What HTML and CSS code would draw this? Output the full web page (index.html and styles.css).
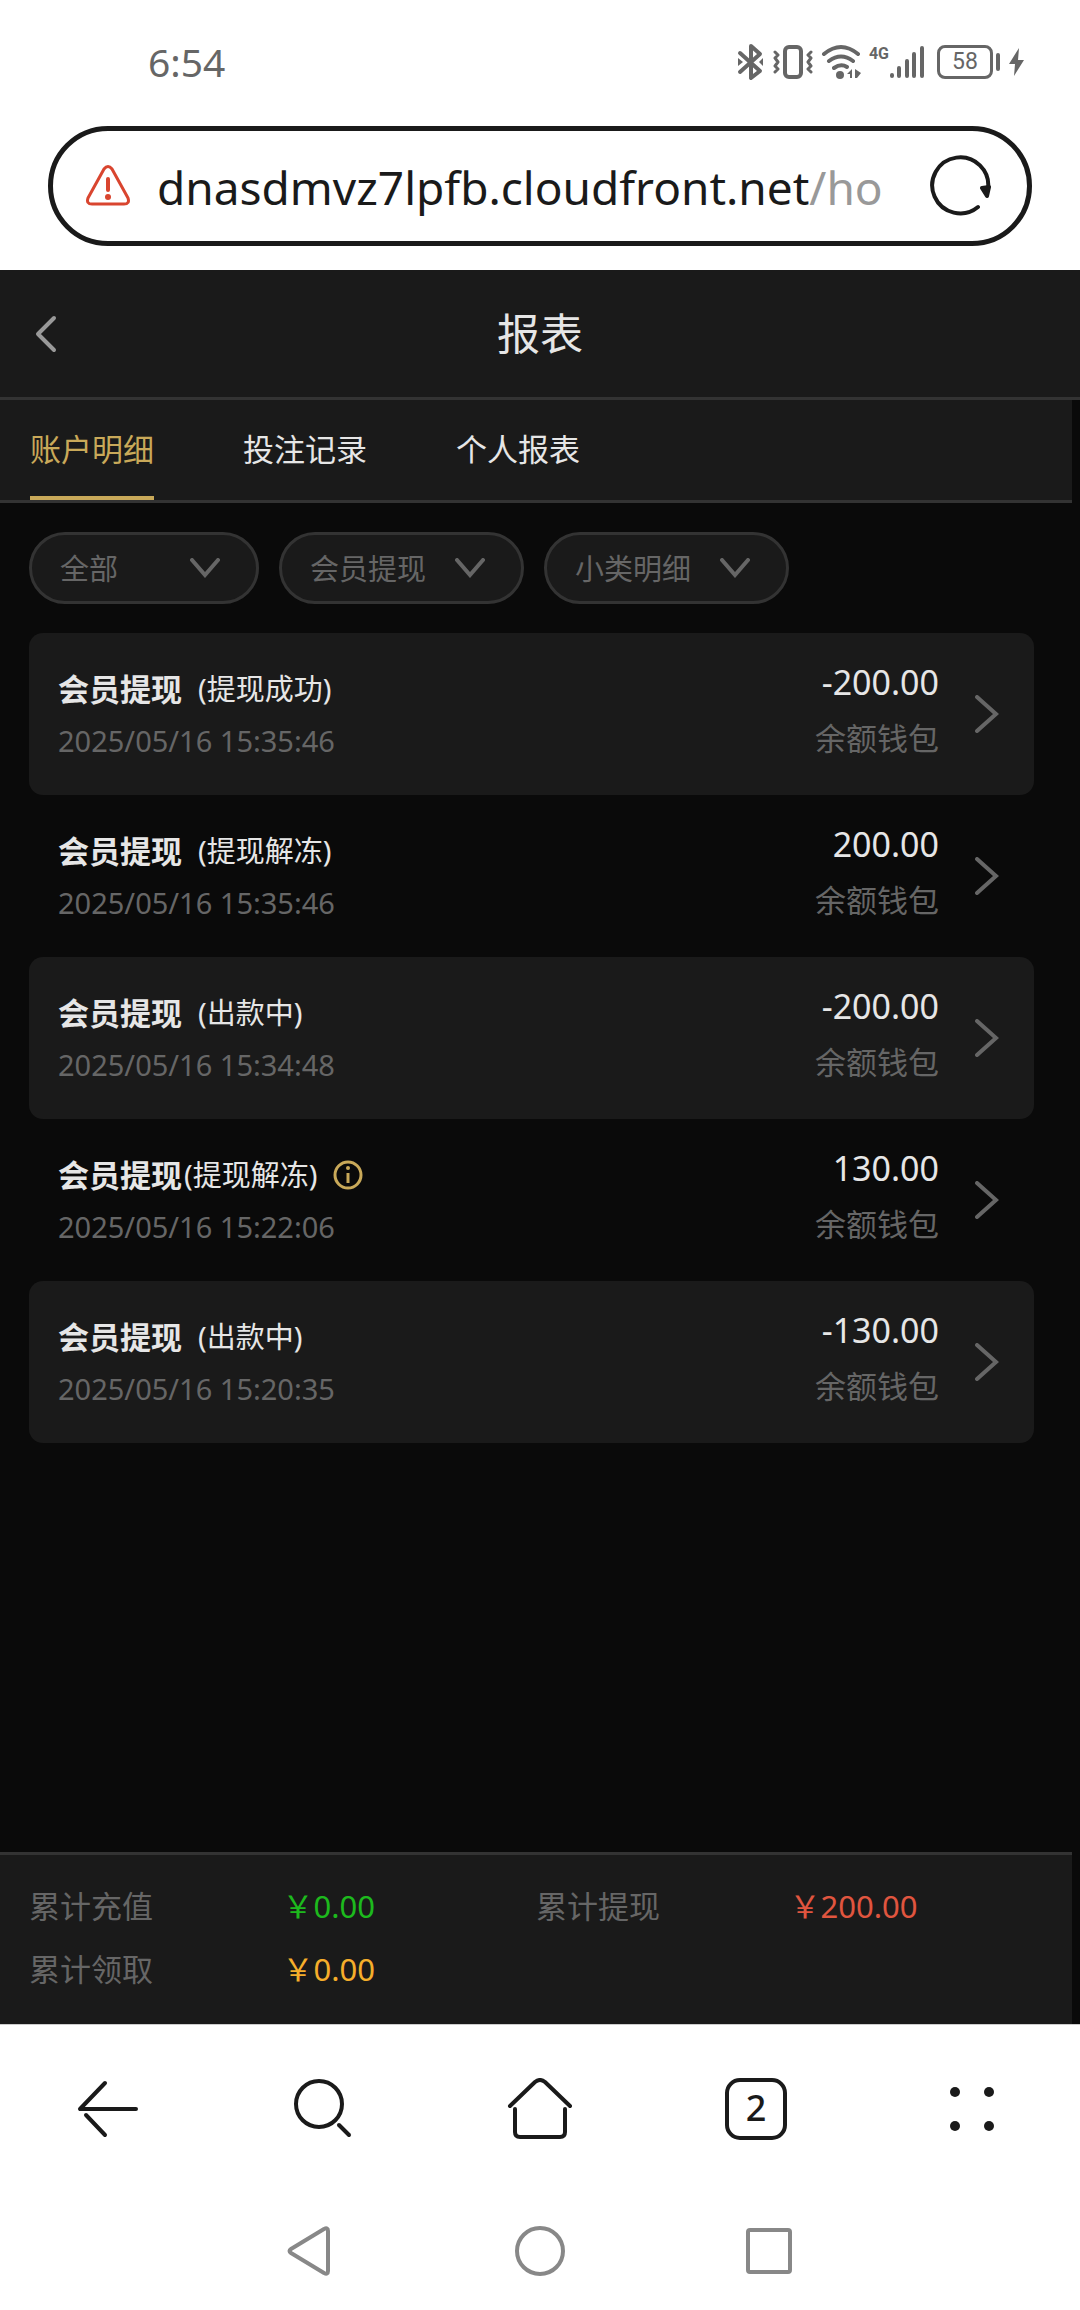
FILE: index.html
```html
<!DOCTYPE html>
<html lang="zh-CN">

<head>
    <meta charset="UTF-8">
    <meta name="viewport" content="width=device-width, initial-scale=1.0">
    <title>报表</title>
    <link rel="stylesheet" href="styles.css">
</head>

<body>

    <!-- Status bar -->
    <div class="status">
        <time class="status-time">6:54</time>
        <div class="status-icons">
            <svg class="ico-bt" width="28" height="38" viewBox="0 0 28 38" fill="none" stroke="#666" stroke-width="4" stroke-linecap="round" stroke-linejoin="round">
                <path d="M3 10 L23 28 L14 35 V3 L23 11 L3 29" />
                <path d="M1 15 L6 19 L1 23 Z M26 15 L22 19 L26 23 Z" fill="#666" stroke="none" />
            </svg>
            <svg class="ico-vibrate" width="40" height="34" viewBox="0 0 40 34" fill="none" stroke="#666" stroke-width="4" stroke-linecap="round" stroke-linejoin="round">
                <rect x="12" y="2" width="16" height="30" rx="4" />
                <path stroke-width="3" d="M2 7 L5 10 L2 13 L5 17 L2 21 L5 24 L2 27 M38 7 L35 10 L38 13 L35 17 L38 21 L35 24 L38 27" />
            </svg>
            <svg class="ico-wifi" width="42" height="36" viewBox="0 0 42 36" fill="none" stroke="#666" stroke-width="4" stroke-linecap="round">
                <path d="M3 10 Q20 -4 37 10 M8 17 Q20 8 32 17 M13 24 Q20 19 26 23" />
                <circle cx="19" cy="31" r="4" fill="#666" stroke="none" />
                <path d="M26 30 L31 25 V34 H29 V30 Z M34 25 L40 29 L36 34 H34 Z" fill="#666" stroke="none" />
            </svg>
            <span class="network">4G</span>
            <svg class="ico-signal" width="36" height="34" viewBox="0 0 36 34" fill="none" stroke="#666" stroke-width="4" stroke-linecap="round">
                <path d="M3 30 V31 M10 23 V31 M18 16 V31 M25 9 V31 M33 3 V31" />
            </svg>
            <span class="battery">58</span>
            <span class="battery-cap"></span>
            <svg class="ico-bolt" width="16" height="30" viewBox="0 0 16 30">
                <path d="M10 1 L0 17 H6 L5 29 L15 13 H9 Z" fill="#666" />
            </svg>
        </div>
    </div>

    <!-- Address bar -->
    <div class="address">
        <svg width="44" height="42" viewBox="0 0 44 42" fill="none" stroke="#d9452f" stroke-width="3" stroke-linecap="round" stroke-linejoin="round">
            <path d="M18 4 Q22 -1 26 4 L42 33 Q44 39 38 39 H6 Q0 39 2 33 Z" />
            <path d="M22 14 V25" stroke-width="4" />
            <circle cx="22" cy="32" r="3" fill="#d9452f" stroke="none" />
        </svg>
        <button class="url" type="button">dnasdmvz7lpfb.cloudfront.net<span class="url-path">/ho</span></button>
        <button class="icon-btn" type="button" aria-label="刷新">
            <svg width="62" height="62" viewBox="0 0 62 62" fill="none" stroke="#1a1a1a" stroke-width="4" stroke-linecap="round" stroke-linejoin="round">
                <path d="M49 52 A28 28 0 1 1 59 34" />
                <path d="M53 33 L58 41 L60 32 Z" fill="#1a1a1a" />
            </svg>
        </button>
    </div>

    <!-- Page -->
    <main class="page">
        <header class="header">
            <button class="icon-btn back" type="button" aria-label="返回">
                <svg width="22" height="38" viewBox="0 0 22 38" fill="none" stroke="#999" stroke-width="4" stroke-linecap="round" stroke-linejoin="round">
                    <path d="M19 3 L3 19 L19 35" />
                </svg>
            </button>
            <h1 class="title">报表</h1>
        </header>

        <div class="content">
            <nav class="tabs">
                <a class="tab active" href="#detail">账户明细</a>
                <a class="tab" href="#bets">投注记录</a>
                <a class="tab" href="#personal">个人报表</a>
            </nav>

            <div class="filters">
                <div class="filter short">
                    <select aria-label="范围"><option>全部</option></select>
                    <svg width="30" height="20" viewBox="0 0 30 20"><path d="M2 2 L15 17 L28 2" /></svg>
                </div>
                <div class="filter">
                    <select aria-label="类型"><option>会员提现</option></select>
                    <svg width="30" height="20" viewBox="0 0 30 20"><path d="M2 2 L15 17 L28 2" /></svg>
                </div>
                <div class="filter">
                    <select aria-label="小类"><option>小类明细</option></select>
                    <svg width="30" height="20" viewBox="0 0 30 20"><path d="M2 2 L15 17 L28 2" /></svg>
                </div>
            </div>

            <ul class="records">
                <li class="record">
                    <div class="record-info">
                        <p class="record-name"><b>会员提现</b><span class="state gap">(提现成功)</span></p>
                        <p class="record-date">2025/05/16 15:35:46</p>
                    </div>
                    <div class="record-money">
                        <p class="amount">-200.00</p>
                        <p class="wallet">余额钱包</p>
                    </div>
                    <svg class="arrow" width="24" height="38" viewBox="0 0 24 38"><path d="M2 2 L21 19 L2 36" /></svg>
                </li>
                <li class="record">
                    <div class="record-info">
                        <p class="record-name"><b>会员提现</b><span class="state gap">(提现解冻)</span></p>
                        <p class="record-date">2025/05/16 15:35:46</p>
                    </div>
                    <div class="record-money">
                        <p class="amount">200.00</p>
                        <p class="wallet">余额钱包</p>
                    </div>
                    <svg class="arrow" width="24" height="38" viewBox="0 0 24 38"><path d="M2 2 L21 19 L2 36" /></svg>
                </li>
                <li class="record">
                    <div class="record-info">
                        <p class="record-name"><b>会员提现</b><span class="state gap">(出款中)</span></p>
                        <p class="record-date">2025/05/16 15:34:48</p>
                    </div>
                    <div class="record-money">
                        <p class="amount">-200.00</p>
                        <p class="wallet">余额钱包</p>
                    </div>
                    <svg class="arrow" width="24" height="38" viewBox="0 0 24 38"><path d="M2 2 L21 19 L2 36" /></svg>
                </li>
                <li class="record">
                    <div class="record-info">
                        <p class="record-name">
                            <b>会员提现</b><span class="state">(提现解冻)</span>
                            <svg class="info" width="30" height="30" viewBox="0 0 30 30" fill="none" stroke="#c9a959" stroke-width="3">
                                <circle cx="15" cy="15" r="13" />
                                <path d="M15 13 V23" />
                                <circle cx="15" cy="8" r="2" fill="#c9a959" stroke="none" />
                            </svg>
                        </p>
                        <p class="record-date">2025/05/16 15:22:06</p>
                    </div>
                    <div class="record-money">
                        <p class="amount">130.00</p>
                        <p class="wallet">余额钱包</p>
                    </div>
                    <svg class="arrow" width="24" height="38" viewBox="0 0 24 38"><path d="M2 2 L21 19 L2 36" /></svg>
                </li>
                <li class="record">
                    <div class="record-info">
                        <p class="record-name"><b>会员提现</b><span class="state gap">(出款中)</span></p>
                        <p class="record-date">2025/05/16 15:20:35</p>
                    </div>
                    <div class="record-money">
                        <p class="amount">-130.00</p>
                        <p class="wallet">余额钱包</p>
                    </div>
                    <svg class="arrow" width="24" height="38" viewBox="0 0 24 38"><path d="M2 2 L21 19 L2 36" /></svg>
                </li>
            </ul>

            <dl class="totals">
                <dt>累计充值</dt>
                <dd class="green">￥0.00</dd>
                <dt>累计提现</dt>
                <dd class="red">￥200.00</dd>
                <dt>累计领取</dt>
                <dd class="orange">￥0.00</dd>
            </dl>
        </div>
    </main>

    <!-- Browser toolbar -->
    <nav class="toolbar">
        <button class="icon-btn" type="button" aria-label="后退">
            <svg width="62" height="62" viewBox="0 0 62 62">
                <path d="M28 5 L3 31 H59 M9 37 L28 57" />
            </svg>
        </button>
        <button class="icon-btn" type="button" aria-label="搜索">
            <svg width="62" height="62" viewBox="0 0 62 62">
                <circle cx="26" cy="26" r="23" />
                <path d="M46 47 L56 57" />
            </svg>
        </button>
        <button class="icon-btn" type="button" aria-label="主页">
            <svg width="66" height="62" viewBox="0 0 66 62">
                <path d="M3 28 L28 4 Q33 0 38 4 L63 28 M8 31 V54 Q8 59 13 59 H53 Q58 59 58 54 V31" />
            </svg>
        </button>
        <button class="icon-btn" type="button" aria-label="标签页">
            <span class="tab-count">2</span>
        </button>
        <button class="icon-btn" type="button" aria-label="菜单">
            <svg class="dots" width="50" height="50" viewBox="0 0 50 50">
                <circle cx="8" cy="8" r="5" />
                <circle cx="42" cy="8" r="5" />
                <circle cx="8" cy="42" r="5" />
                <circle cx="42" cy="42" r="5" />
            </svg>
        </button>
    </nav>

    <!-- System navigation -->
    <nav class="system">
        <button class="icon-btn" type="button" aria-label="返回">
            <svg width="52" height="52" viewBox="0 0 52 52">
                <path d="M7 24 L40 4 Q44 2 44 6 V46 Q44 50 40 48 L7 28 Q4 26 7 24 Z" />
            </svg>
        </button>
        <button class="icon-btn" type="button" aria-label="桌面">
            <svg width="52" height="52" viewBox="0 0 52 52">
                <circle cx="26" cy="26" r="23" />
            </svg>
        </button>
        <button class="icon-btn" type="button" aria-label="最近任务">
            <svg width="52" height="52" viewBox="0 0 52 52">
                <rect x="4" y="5" width="42" height="42" rx="2" />
            </svg>
        </button>
    </nav>

</body>

</html>
```
FILE: styles.css
```css
* {
    box-sizing: border-box;
}

body {
    display: flex;
    flex-direction: column;
    min-height: 100vh;
    margin: 0;
    background: #fff;
    color: #e6e6e6;
    font-family: "Noto Sans", "Noto Sans CJK SC", sans-serif;
    font-size: 31px;
    line-height: 40px;
}

p,
ul,
dl,
dd,
h1 {
    margin: 0;
    padding: 0;
}

svg {
    display: block;
    flex: none;
}

button {
    padding: 0;
    border: none;
    background: none;
    color: inherit;
    font: inherit;
    cursor: pointer;
}

.icon-btn {
    display: flex;
    align-items: center;
    justify-content: center;
}

/* Status bar */

.status {
    display: flex;
    align-items: center;
    justify-content: space-between;
    height: 126px;
    padding: 0 55px 2px 148px;
    color: #666;
}

.status-time {
    font-size: 39px;
}

.status-icons {
    display: flex;
    align-items: center;
}

.ico-vibrate {
    margin-left: 8px;
}

.ico-wifi {
    margin-left: 8px;
}

.network {
    align-self: flex-start;
    margin-left: 6px;
    font-family: Roboto, sans-serif;
    font-size: 16px;
    font-weight: bold;
    line-height: 22px;
}

.battery {
    width: 56px;
    height: 34px;
    margin-left: 12px;
    border: 3px solid #666;
    border-radius: 8px;
    font-family: Roboto, sans-serif;
    font-size: 23px;
    line-height: 28px;
    text-align: center;
}

.battery-cap {
    width: 4px;
    height: 18px;
    margin-left: 3px;
    border-radius: 2px;
    background: #666;
}

.ico-bolt {
    margin-left: 9px;
}

/* Address bar */

.address {
    display: flex;
    align-items: center;
    height: 120px;
    margin: 0 48px 24px;
    padding: 0 36px 0 33px;
    border: 5px solid #1a1a1a;
    border-radius: 60px;
}

.url {
    flex: 1;
    margin-left: 27px;
    padding-top: 2px;
    overflow: hidden;
    color: #1a1a1a;
    font-size: 46px;
    line-height: 64px;
    text-align: left;
    white-space: nowrap;
}

.url-path {
    color: #999;
}

/* Page */

.page {
    display: flex;
    flex: 1;
    flex-direction: column;
    background: #0a0a0a;
}

.header {
    display: grid;
    grid-template-columns: 1fr auto 1fr;
    align-items: center;
    height: 130px;
    padding: 0 35px;
    border-bottom: 3px solid #333;
    background: #1a1a1a;
}

.back {
    justify-self: start;
}

.title {
    font-size: 43px;
    font-weight: normal;
    line-height: 60px;
}

.content {
    display: flex;
    flex: 1;
    flex-direction: column;
    margin-right: 8px;
}

.tabs {
    display: flex;
    gap: 89px;
    padding: 0 30px;
    border-bottom: 3px solid #333;
    background: #1a1a1a;
}

.tab {
    height: 100px;
    border-bottom: 4px solid transparent;
    color: #e6e6e6;
    line-height: 98px;
    text-decoration: none;
}

.tab.active {
    border-color: #c9a959;
    color: #c9a959;
}

.filters {
    display: flex;
    gap: 20px;
    padding: 29px;
}

.filter {
    display: grid;
    align-items: center;
    width: 245px;
}

.filter.short {
    width: 230px;
}

.filter select,
.filter svg {
    grid-area: 1 / 1;
}

.filter select {
    width: 100%;
    height: 72px;
    padding: 0 28px;
    border: 3px solid #333;
    border-radius: 36px;
    appearance: none;
    background: #1a1a1a;
    color: #666;
    font-family: inherit;
    font-size: 29px;
}

.filter svg {
    justify-self: end;
    margin-right: 39px;
    fill: none;
    stroke: #666;
    stroke-width: 4px;
    stroke-linecap: round;
    pointer-events: none;
}

.records {
    flex: 1;
    padding: 0 38px 0 29px;
    list-style: none;
}

.record {
    display: flex;
    align-items: center;
    height: 162px;
    padding: 0 35px 0 29px;
    border-radius: 14px;
}

.record:nth-child(odd) {
    background: #1a1a1a;
}

.record-info {
    flex: 1;
    padding-top: 2px;
}

.record-name {
    display: flex;
    align-items: center;
    height: 52px;
}

.state {
    margin-left: 2px;
    font-size: 29px;
}

.state.gap {
    margin-left: 16px;
}

.info {
    margin-left: 16px;
}

.record-date {
    color: #666;
    font-size: 29px;
    line-height: 52px;
}

.record-money {
    padding-bottom: 8px;
    color: #666;
    line-height: 56px;
    text-align: right;
}

.amount {
    color: #e6e6e6;
    font-size: 34px;
}

.arrow {
    margin-left: 36px;
    fill: none;
    stroke: #666;
    stroke-width: 4px;
    stroke-linecap: round;
}

.totals {
    display: grid;
    grid-template-columns: repeat(4, 1fr);
    row-gap: 23px;
    padding: 31px 29px 35px;
    border-top: 3px solid #333;
    background: #1a1a1a;
    color: #666;
}

.green {
    color: #1db91d;
}

.red {
    color: #e0553f;
}

.orange {
    grid-column: 2 / 5;
    color: #f5ae2b;
}

/* Browser toolbar */

.toolbar {
    display: grid;
    grid-template-columns: repeat(5, 1fr);
    height: 170px;
    padding-bottom: 2px;
    border-top: 1px solid #ccc;
}

.toolbar svg {
    fill: none;
    stroke: #1a1a1a;
    stroke-width: 4px;
    stroke-linecap: round;
    stroke-linejoin: round;
}

.toolbar .dots {
    fill: #1a1a1a;
    stroke: none;
}

.tab-count {
    width: 62px;
    height: 62px;
    border: 4px solid #1a1a1a;
    border-radius: 15px;
    color: #1a1a1a;
    font-size: 36px;
    font-weight: 500;
    line-height: 52px;
}

/* System navigation */

.system {
    display: flex;
    justify-content: center;
    gap: 178px;
    height: 116px;
    padding-bottom: 2px;
}

.system svg {
    fill: none;
    stroke: #888;
    stroke-width: 4px;
    stroke-linejoin: round;
}
```
